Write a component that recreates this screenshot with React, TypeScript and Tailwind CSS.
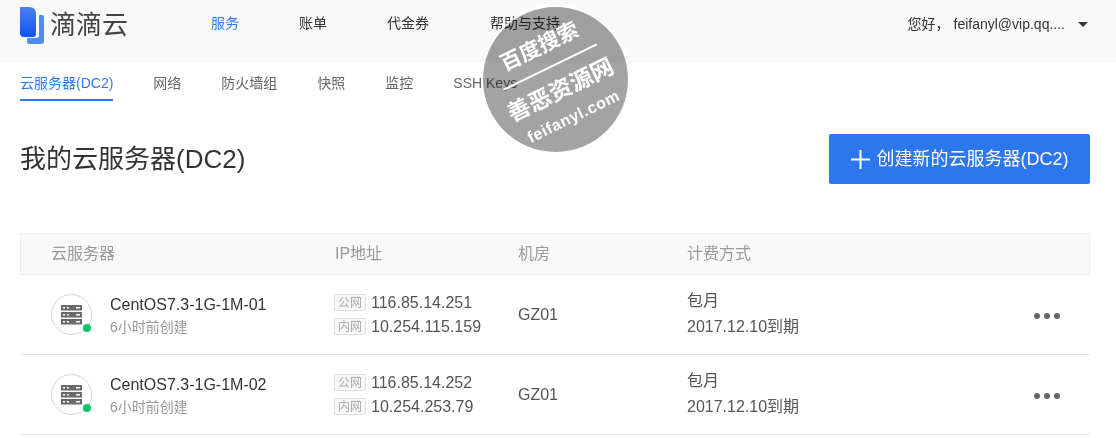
const navItems = [
  { label: "服务", className: "w-[88px] text-[#2f7bee]" },
  { label: "账单", className: "w-[88px] text-[#333333]" },
  { label: "代金券", className: "w-[103px] text-[#333333]" },
  { label: "帮助与支持", className: "text-[#333333]" },
];

const tabs = ["网络", "防火墙组", "快照", "监控", "SSH Keys"];

const servers = [
  { name: "CentOS7.3-1G-1M-01", publicIp: "116.85.14.251", privateIp: "10.254.115.159" },
  { name: "CentOS7.3-1G-1M-02", publicIp: "116.85.14.252", privateIp: "10.254.253.79" },
];

function ServerIcon() {
  return (
    <div className="relative flex h-[41px] w-[41px] shrink-0 items-center justify-center rounded-full border border-[#d8d4d0]">
      <svg width="21" height="20" viewBox="0 0 21 20">
        <path fill="#6a6a6a" d="M0 0h21v5.5H0zM0 7h21v5.5H0zM0 14h21v5.5H0z" />
        <path
          fill="#fff"
          d="M15 2h4v1.5h-4zM15 9h4v1.5h-4zM15 16h4v1.5h-4zM2 2h2v1.5H2zM6 2h2v1.5H6zM2 9h2v1.5H2zM6 9h2v1.5H6zM2 16h2v1.5H2zM6 16h2v1.5H6z"
        />
      </svg>
      <span className="absolute bottom-[2px] right-[0px] h-2 w-2 rounded-full bg-[#0cc46c]" />
    </div>
  );
}

function IpLine({ tag, ip }: { tag: string; ip: string }) {
  return (
    <div className="flex h-[24px] items-center">
      <span className="mr-[5px] flex h-[17px] w-[32px] items-center justify-center rounded-[2px] border border-[#dddddd] bg-[#f9f9f9] text-[12px] text-[#aaaaaa]">
        {tag}
      </span>
      <span className="text-[16px] text-[#555555]">{ip}</span>
    </div>
  );
}

function ServerRow({ server }: { server: (typeof servers)[number] }) {
  return (
    <div className="flex h-[80px] items-center border-b border-[#e2e2e2]">
      <div className="flex w-[314px] items-center pl-[31px]">
        <ServerIcon />
        <div className="ml-[18px]">
          <p className="text-[16px] leading-[24px] text-[#333333]">{server.name}</p>
          <p className="text-[14px] leading-[20px] text-[#999999]">6小时前创建</p>
        </div>
      </div>
      <div className="w-[184px]">
        <IpLine tag="公网" ip={server.publicIp} />
        <IpLine tag="内网" ip={server.privateIp} />
      </div>
      <div className="w-[169px] text-[16px] text-[#555555]">GZ01</div>
      <div className="flex-1 pb-[2px] text-[16px] leading-[26px] text-[#555555]">
        <p>包月</p>
        <p>2017.12.10到期</p>
      </div>
      <div className="mr-[30px] mt-[2px] flex gap-[4px]">
        <span className="h-[6px] w-[6px] rounded-full bg-[#666666]" />
        <span className="h-[6px] w-[6px] rounded-full bg-[#666666]" />
        <span className="h-[6px] w-[6px] rounded-full bg-[#666666]" />
      </div>
    </div>
  );
}

function Watermark() {
  return (
    <div className="absolute left-[481px] top-[5px] h-[149px] w-[149px] rounded-full border-[2px] border-white/70">
      <div className="absolute inset-0 rounded-full bg-[#a3a3a3] mix-blend-multiply" />
      <div className="absolute inset-0 flex -rotate-[26deg] flex-col items-center pt-[22px] text-white">
        <p className="text-[21px] font-bold leading-[28px]">百度搜索</p>
        <div className="mt-[8px] h-[1.5px] w-[104px] bg-white" />
        <p className="mt-[9px] text-[23px] font-bold leading-[30px]">善恶资源网</p>
        <p className="mt-[4px] text-[16px] font-bold leading-[22px] tracking-[0.6px]">feifanyl.com</p>
      </div>
    </div>
  );
}

export default function App() {
  return (
    <div className="relative h-[438px] w-[1116px] overflow-hidden bg-white font-['Liberation_Sans','Noto_Sans_CJK_SC',sans-serif]">
      <header className="flex h-[63px] items-start bg-[#f9f9f9]">
        <div className="ml-[20px] mt-[6px] flex items-center">
          <svg width="24" height="37" viewBox="0 0 24 37">
            <defs>
              <linearGradient id="logoFront" x1="0" y1="0" x2="0" y2="1">
                <stop offset="0" stopColor="#4d80ee" />
                <stop offset="1" stopColor="#0a55f5" />
              </linearGradient>
            </defs>
            <path fill="#4f8df0" d="M19 8h3q2 0 2 2v24q0 3-3 3H9q-2 0-2-2v-4h9q3 0 3-3z" />
            <path fill="url(#logoFront)" d="M0 0h9q7 0 7 7v20q0 3-3 3H4q-4 0-4-4z" />
          </svg>
          <span className="ml-[6px] text-[26px] leading-[38px] text-[#444444]">滴滴云</span>
        </div>
        <nav className="ml-[83px] mt-[13px] flex text-[14px] leading-[20px]">
          {navItems.map((item) => (
            <span key={item.label} className={item.className}>
              {item.label}
            </span>
          ))}
        </nav>
        <div className="ml-auto mr-[28px] mt-[14px] flex items-center text-[14px] leading-[20px] text-[#333333]">
          <span>您好，</span>
          <span className="ml-[4px]">feifanyl@vip.qq....</span>
          <span className="ml-[13px] h-0 w-0 border-x-[5px] border-t-[5px] border-x-transparent border-t-[#333333]" />
        </div>
      </header>

      <div className="flex h-[38px] items-start pl-[20px] text-[14px] text-[#666666]">
        <span className="h-[38px] border-b-2 border-[#2f7bee] pt-[10px] leading-[20px] text-[#2f7bee]">
          云服务器(DC2)
        </span>
        {tabs.map((tab) => (
          <span key={tab} className="ml-[40px] pt-[10px] leading-[20px]">
            {tab}
          </span>
        ))}
      </div>

      <div className="mt-[33px] flex h-[50px] items-center justify-between pl-[20px] pr-[26px]">
        <h1 className="text-[26px] font-normal text-[#333333]">我的云服务器(DC2)</h1>
        <button className="flex h-[50px] w-[261px] items-center justify-center rounded-[2px] bg-[#2c77ee] text-[18px] text-white">
          <svg width="19" height="19" viewBox="0 0 19 19" className="mr-[7px]">
            <path fill="#fff" d="M8.5 0h2v8.5H19v2h-8.5V19h-2v-8.5H0v-2h8.5z" />
          </svg>
          创建新的云服务器(DC2)
        </button>
      </div>

      <div className="ml-[20px] mr-[26px] mt-[49px]">
        <div className="flex h-[42px] items-center border border-[#eeeeee] bg-[#f9f9f9] text-[16px] text-[#999999]">
          <span className="w-[314px] pl-[30px]">云服务器</span>
          <span className="w-[183px]">IP地址</span>
          <span className="w-[169px]">机房</span>
          <span>计费方式</span>
        </div>
        {servers.map((server) => (
          <ServerRow key={server.name} server={server} />
        ))}
      </div>

      <Watermark />
    </div>
  );
}
